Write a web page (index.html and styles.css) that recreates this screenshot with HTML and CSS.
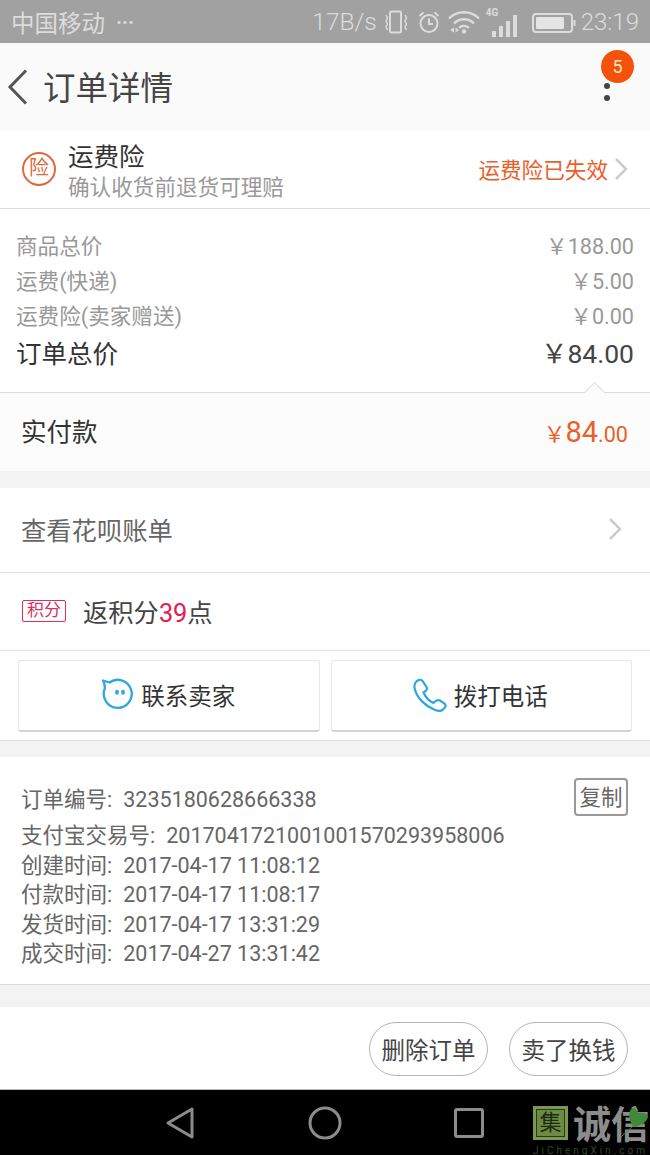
FILE: index.html
```html
<!DOCTYPE html>
<html lang="zh-CN">
<head>
<meta charset="UTF-8">
<meta name="viewport" content="width=device-width, initial-scale=1.0">
<title>订单详情</title>
<link rel="stylesheet" href="styles.css">
</head>
<body>

<div class="status-bar">
  <div class="status-left">
    <span class="carrier">中国移动</span>
    <span class="dots">···</span>
  </div>
  <div class="status-right">
    <span class="speed">17B/s</span>
    <svg class="st-vibrate" width="24" height="24" viewBox="0 0 24 24" fill="none" stroke="#dcdcdc" stroke-width="2">
      <rect x="6" y="1.500" width="11" height="21" rx="1.500"/>
      <path d="M2 5l1.500 3-1.500 3 1.500 3-1.500 3 1.500 3M21 5l1.500 3-1.500 3 1.500 3-1.500 3 1.500 3" stroke-width="1.500"/>
    </svg>
    <svg class="st-alarm" width="24" height="24" viewBox="0 0 24 24" fill="none" stroke="#dcdcdc" stroke-width="2">
      <circle cx="12" cy="13.500" r="8.500"/>
      <path d="M12 8.500v5.500h4M2.500 6l4-3.500M21.500 6l-4-3.500"/>
    </svg>
    <svg class="st-wifi" width="32" height="24" viewBox="0 0 32 24" fill="none" stroke="#dcdcdc" stroke-width="2.400">
      <path d="M1 8.500a21 21 0 0 1 30 0M6 13.500a14 14 0 0 1 20 0M11 18a7 7 0 0 1 10 0"/>
      <circle cx="16" cy="21.500" r="2.200" fill="#dcdcdc" stroke="none"/>
      <path d="M2 20l4-2.500v5zM11 20l-3.500-2.500v5z" fill="#dcdcdc" stroke="none"/>
    </svg>
    <div class="signal">
      <span class="net">4G</span>
      <i class="bar b1"></i><i class="bar b2"></i><i class="bar b3"></i><i class="bar b4"></i>
    </div>
    <svg class="battery" width="44" height="20" viewBox="0 0 44 20" fill="none">
      <rect x="1" y="1" width="39" height="18" rx="3" stroke="#dcdcdc" stroke-width="2"/>
      <rect x="4" y="4" width="28" height="12" rx="1" fill="#e4e4e4"/>
      <path d="M42.500 7v6" stroke="#dcdcdc" stroke-width="2"/>
    </svg>
    <span class="clock">23:19</span>
  </div>
</div>

<div class="nav">
  <svg class="back" width="24" height="38" viewBox="0 0 24 38" fill="none" stroke="#555" stroke-width="3">
    <path d="M20 2.500L4 19l16 16.500"/>
  </svg>
  <h1 class="nav-title">订单详情</h1>
  <div class="more">
    <span class="dot"></span><span class="dot"></span>
    <span class="badge">5</span>
  </div>
</div>

<div class="insure">
  <span class="insure-icon">险</span>
  <div class="insure-text">
    <div class="insure-name">运费险</div>
    <div class="insure-desc">确认收货前退货可理赔</div>
  </div>
  <span class="insure-state">运费险已失效</span>
  <svg class="chev" width="14" height="24" viewBox="0 0 14 24" fill="none" stroke="#ccc" stroke-width="2.500">
    <path d="M2 2l10 10L2 22"/>
  </svg>
</div>

<div class="prices">
  <div class="price-row"><span>商品总价</span><span class="num">￥188.00</span></div>
  <div class="price-row"><span>运费(快递)</span><span class="num">￥5.00</span></div>
  <div class="price-row"><span>运费险(卖家赠送)</span><span class="num">￥0.00</span></div>
  <div class="price-row total"><span>订单总价</span><span class="num">￥84.00</span></div>
</div>

<div class="paid">
  <span class="notch"></span>
  <span class="paid-label">实付款</span>
  <span class="paid-num"><small>￥</small><b>84</b><small>.00</small></span>
</div>

<div class="gap"></div>

<div class="row huabei">
  <span>查看花呗账单</span>
  <svg class="chev" width="14" height="24" viewBox="0 0 14 24" fill="none" stroke="#ccc" stroke-width="2.500">
    <path d="M2 2l10 10L2 22"/>
  </svg>
</div>

<div class="row points">
  <span class="points-tag">积分</span>
  <span class="points-text">返积分<em>39</em>点</span>
</div>

<div class="contact">
  <button class="contact-btn">
    <svg width="34" height="34" viewBox="0 0 34 34" fill="none" stroke="#2ea6df" stroke-width="2.300">
      <path d="M3 2.500L9.500 4.500A14 14 0 1 1 4.800 10.500Q5 6 3 2.500z" stroke-linejoin="round"/>
      <path d="M17 13.500v1.500M23 13.500v1.500" stroke-width="3.600" stroke-linecap="round"/>
    </svg>
    联系卖家
  </button>
  <button class="contact-btn">
    <svg width="34" height="34" viewBox="0 0 34 34" fill="none" stroke="#2ea6df" stroke-width="2.200">
      <path d="M3 4C5 1.500 8 1 9.500 3L13.500 9C14.500 11 13.500 12.500 12 13.500L10.500 14.500C12.500 19 16 23 20.500 25L22 23.500C23.500 22 25 21.500 27 22.500L31.500 25.500C33 27 33 28.500 31.500 30L29.500 32C27.500 33.500 25 33 22 32C12 28 4 20 1.800 11C1 8 1.500 5.500 3 4z"/>
    </svg>
    拨打电话
  </button>
</div>

<div class="gap gap-mid"></div>

<div class="info">
  <div class="info-first">
    <span><span class="info-label">订单编号:</span>3235180628666338</span>
    <span class="copy">复制</span>
  </div>
  <div class="info-line"><span class="info-label">支付宝交易号:</span>2017041721001001570293958006</div>
  <div class="info-line"><span class="info-label">创建时间:</span>2017-04-17 11:08:12</div>
  <div class="info-line"><span class="info-label">付款时间:</span>2017-04-17 11:08:17</div>
  <div class="info-line"><span class="info-label">发货时间:</span>2017-04-17 13:31:29</div>
  <div class="info-line"><span class="info-label">成交时间:</span>2017-04-27 13:31:42</div>
</div>

<div class="gap gap-low"></div>

<div class="actions">
  <button class="pill">删除订单</button>
  <button class="pill">卖了换钱</button>
</div>

<div class="sys-nav">
  <svg width="32" height="34" viewBox="0 0 32 34" fill="none" stroke="#8c8c8c" stroke-width="3">
    <path d="M28 3L4 17l24 14z" stroke-linejoin="round"/>
  </svg>
  <svg width="34" height="34" viewBox="0 0 34 34" fill="none" stroke="#8c8c8c" stroke-width="3">
    <circle cx="17" cy="17" r="15"/>
  </svg>
  <svg width="30" height="30" viewBox="0 0 30 30" fill="none" stroke="#8c8c8c" stroke-width="3">
    <rect x="1.500" y="1.500" width="27" height="27" rx="1.500"/>
  </svg>
  <div class="mark">
    <span class="mark-seal">集</span>
    <span class="mark-name">诚信</span>
    <span class="mark-url">JiChengXin.com</span>
    <svg class="leaf" width="29" height="31" viewBox="0 0 29 31">
      <path d="M0 30C5 25 9 22 13 18" fill="none" stroke="#4f8a3a" stroke-width="1"/>
      <path d="M13 20C7 14 7 4 11 1c3 0 5 2 6 5 3-1 8 0 10 3 0 5-7 10-14 11z" fill="#3f8a3a"/>
    </svg>
  </div>
</div>

</body>
</html>
```

FILE: styles.css
```css
* {
  box-sizing: border-box;
}
body {
  font-family: Roboto, 'Noto Sans CJK SC', sans-serif;
  background-color: #fff;
  color: #333;
  margin: 0;
  padding: 0;
  width: 650px;
  height: 1155px;
  overflow: hidden;
}

/* status bar */
.status-bar {
  height: 43px;
  background-color: #a1a1a1;
  color: #dcdcdc;
  display: flex;
  justify-content: space-between;
  align-items: center;
  padding: 0 11px;
}
.status-left, .status-right {
  display: flex;
  align-items: center;
}
.carrier {
  font-size: 23.500px;
}
.dots {
  font-size: 20px;
  margin-left: 11px;
  font-weight: bold;
}
.speed {
  font-size: 24.500px;
  font-weight: 300;
  margin-right: 7px;
}
.st-vibrate {
  margin-right: 9px;
}
.st-alarm {
  margin-right: 7px;
}
.st-wifi {
  margin-right: 6px;
}
.signal {
  position: relative;
  width: 31px;
  height: 26px;
  display: flex;
  align-items: flex-end;
  justify-content: flex-end;
  gap: 3px;
  margin-right: 15px;
  margin-top: 4px;
}
.net {
  position: absolute;
  left: 0;
  top: -4px;
  font-size: 10px;
  font-weight: bold;
}
.bar {
  width: 4px;
  background-color: #dcdcdc;
}
.b1 { height: 6px; }
.b2 { height: 11px; }
.b3 { height: 16px; }
.b4 { height: 22px; }
.battery {
  margin-right: 5px;
  margin-top: 2px;
}
.clock {
  font-size: 24px;
  font-weight: 300;
}

/* title bar */
.nav {
  height: 87px;
  background-color: #fafafa;
  display: flex;
  align-items: center;
  padding-left: 6px;
}
.back {
  margin-right: 13px;
}
.nav-title {
  font-size: 32.500px;
  font-weight: 400;
  color: #444;
  margin: 0 0 2px;
  flex: 1;
}
.more {
  position: relative;
  width: 6px;
  margin-right: 40px;
  display: flex;
  flex-direction: column;
  gap: 6px;
  margin-top: 11px;
}
.dot {
  width: 6px;
  height: 6px;
  border-radius: 50%;
  background-color: #444;
}
.badge {
  position: absolute;
  left: -3px;
  top: -33px;
  width: 33px;
  height: 33px;
  border-radius: 50%;
  background-color: #f4510b;
  color: #ffe9c8;
  font-size: 18px;
  text-align: center;
  line-height: 33px;
}

/* insurance */
.insure {
  height: 79px;
  border-bottom: 1px solid #dcdcdc;
  display: flex;
  align-items: center;
  padding: 0 22px;
}
.insure-icon {
  width: 34px;
  height: 34px;
  border: 2px solid #e0693a;
  border-radius: 50%;
  color: #e0693a;
  font-size: 20px;
  line-height: 28px;
  text-align: center;
  margin-right: 12px;
  flex: none;
}
.insure-text {
  flex: 1;
  margin-top: 6px;
}
.insure-name {
  font-size: 25.500px;
  line-height: 32px;
  color: #333;
}
.insure-desc {
  font-size: 21.600px;
  line-height: 30px;
  color: #999;
}
.insure-state {
  font-size: 21.600px;
  color: #e8602a;
  margin: 0 6px 2px 0;
}

/* prices */
.prices {
  height: 184px;
  border-bottom: 1px solid #dcdcdc;
  padding: 18px 16px 0;
}
.price-row {
  display: flex;
  justify-content: space-between;
  align-items: center;
  height: 35px;
  font-size: 21.600px;
  color: #999;
}
.price-row.total {
  height: 38px;
  font-size: 25.500px;
  color: #333;
}
.price-row.total .num {
  font-size: 26.500px;
  color: #444;
}

.paid {
  position: relative;
  height: 78px;
  background-color: #fcfcfc;
  display: flex;
  justify-content: space-between;
  align-items: center;
  padding: 0 22px 0 21px;
}
.paid-label {
  font-size: 25.500px;
  color: #333;
  margin-bottom: 6px;
}
.paid-num {
  color: #e8602a;
}
.paid-num small {
  font-size: 21.600px;
}
.paid-num b {
  font-size: 29px;
  font-weight: 400;
}
.notch {
  position: absolute;
  left: 587px;
  top: -8px;
  width: 15px;
  height: 15px;
  background-color: #fcfcfc;
  border-left: 1px solid #dcdcdc;
  border-top: 1px solid #dcdcdc;
  transform: rotate(45deg);
}

.gap {
  height: 17px;
  background-color: #f3f3f3;
}
.gap-mid {
  height: 16px;
}
.gap-low {
  height: 23px;
  border-top: 1px solid #dcdcdc;
}

/* rows */
.row {
  display: flex;
  align-items: center;
  border-bottom: 1px solid #e4e4e4;
  padding: 0 22px 2px;
  font-size: 25.300px;
}
.huabei {
  height: 85px;
  justify-content: space-between;
  color: #666;
  padding-left: 21px;
  padding-right: 28px;
}
.points {
  height: 78px;
  color: #444;
}
.points-tag {
  width: 44px;
  height: 22px;
  border: 1px solid #d8325c;
  border-radius: 2px;
  color: #d8325c;
  font-size: 17px;
  line-height: 19px;
  text-align: center;
  margin-right: 17px;
}
.points-text em {
  font-style: normal;
  color: #e0204f;
}

.contact {
  height: 90px;
  border-bottom: 1px solid #dcdcdc;
  display: flex;
  gap: 11px;
  padding: 9px 18px 0;
}
.contact-btn {
  flex: 1;
  height: 72px;
  background-color: #fff;
  border: 1px solid #e6e6e6;
  border-bottom: 2px solid #d4d4d4;
  border-radius: 3px;
  font-family: inherit;
  font-size: 23.500px;
  color: #333;
  display: flex;
  align-items: center;
  justify-content: center;
  gap: 7px;
  padding: 0 2px 2px 0;
}

/* order info */
.info {
  height: 227px;
  padding: 21px 22px 0 21px;
  font-size: 21.500px;
  color: #666;
  background-color: #fff;
}
.info-label {
  margin-right: 11px;
}
.info-first {
  display: flex;
  justify-content: space-between;
  align-items: center;
  height: 38px;
  margin-bottom: 5px;
}
.copy {
  width: 54px;
  height: 38px;
  border: 2px solid #999;
  border-radius: 4px;
  text-align: center;
  line-height: 36px;
}
.info-line {
  height: 29.500px;
  line-height: 29.500px;
}

.actions {
  height: 83px;
  border-bottom: 1px solid #bbb;
  display: flex;
  justify-content: flex-end;
  gap: 21px;
  padding: 15px 22px 0;
}
.pill {
  width: 119px;
  height: 54px;
  background-color: #fff;
  border: 1px solid #b5b5b5;
  border-radius: 27px;
  font-family: inherit;
  font-size: 23.500px;
  color: #444;
  padding: 0;
}

/* system nav */
.sys-nav {
  position: relative;
  height: 65px;
  background-color: #000;
  display: flex;
  align-items: center;
  gap: 112px;
  padding-left: 164px;
}
.mark {
  position: absolute;
  left: 533px;
  top: 15px;
  width: 117px;
  height: 50px;
}
.mark-seal {
  position: absolute;
  left: 0;
  top: 1px;
  width: 35px;
  height: 34px;
  background-color: #6b8a42;
  border: 3px solid #7c9653;
  outline: 1px solid #2a3a18;
  outline-offset: -4px;
  color: #1d2c10;
  font-size: 22px;
  line-height: 27px;
  text-align: center;
}
.mark-name {
  position: absolute;
  left: 40px;
  top: -2px;
  font-size: 38px;
  font-weight: 700;
  line-height: 44px;
  color: #8c8c8c;
  white-space: nowrap;
}
.mark-url {
  position: absolute;
  left: 0;
  top: 40px;
  font-size: 10px;
  letter-spacing: 3px;
  color: #2f4a20;
  white-space: nowrap;
}
.leaf {
  position: absolute;
  left: 88px;
  top: 2px;
}
```
